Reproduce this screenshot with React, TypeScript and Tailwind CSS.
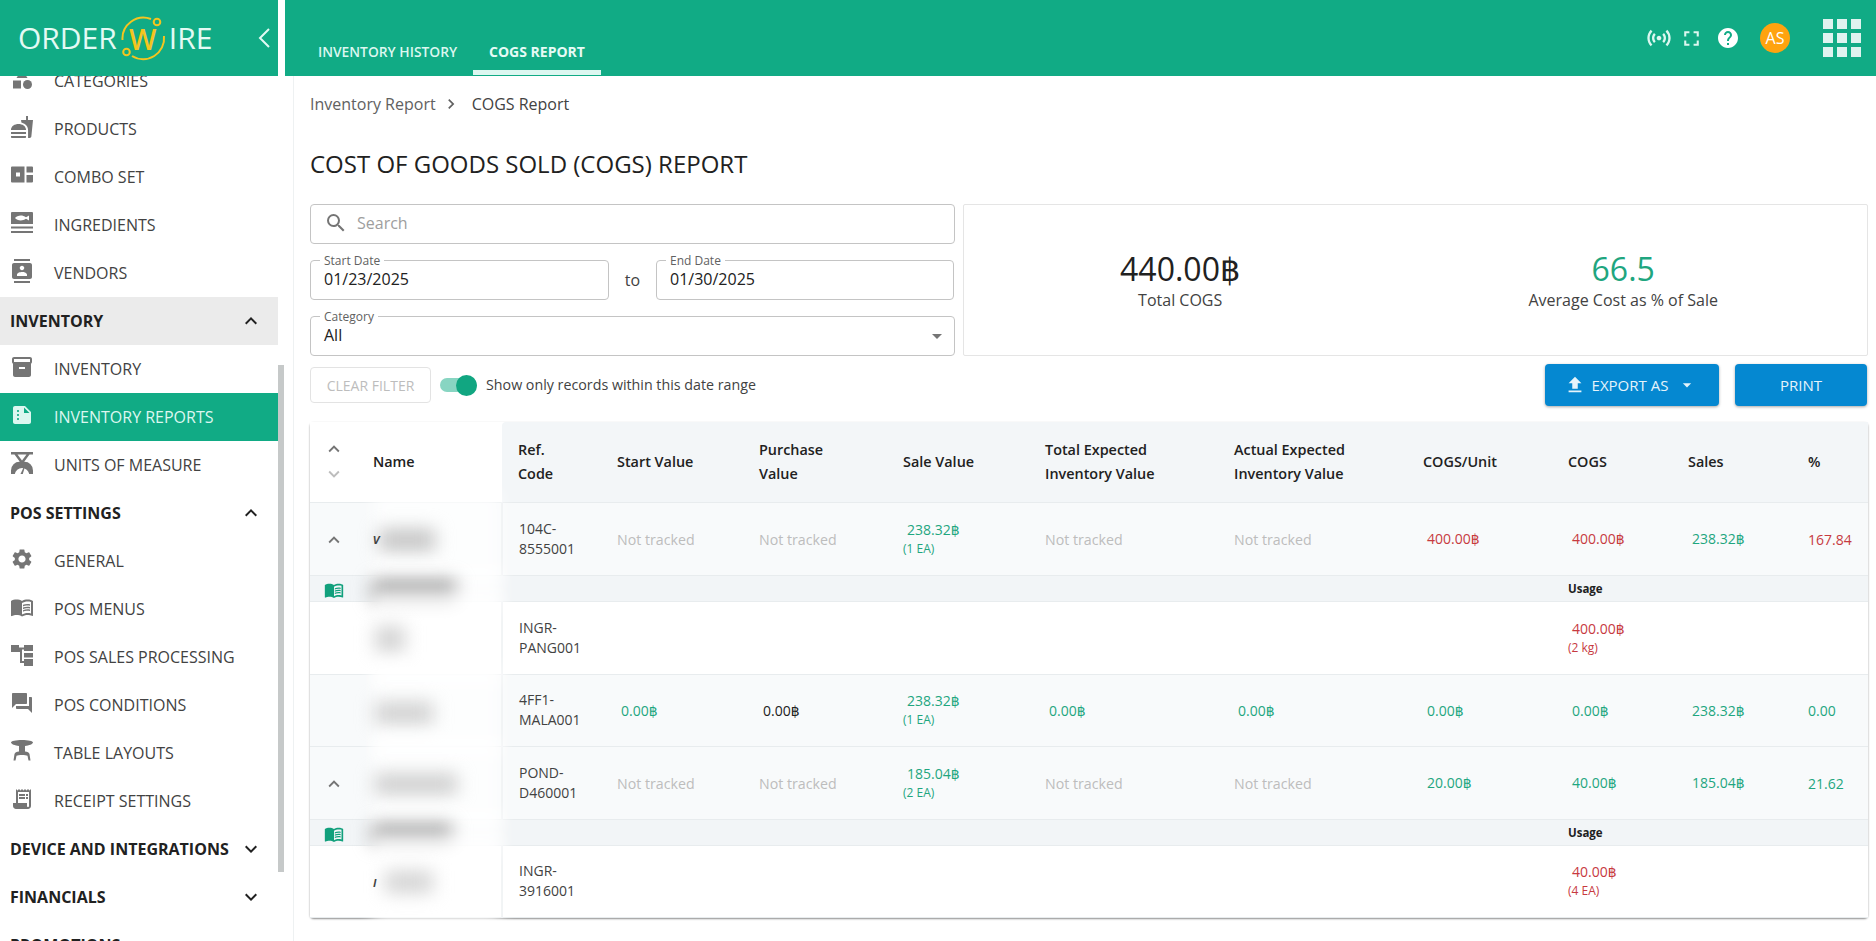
import type { ReactNode } from 'react';
import {
  MdArrowDropDown,
  MdCategory,
  MdChevronRight,
  MdContacts,
  MdExpandLess,
  MdExpandMore,
  MdFastfood,
  MdFileUpload,
  MdForum,
  MdFullscreen,
  MdHelp,
  MdInventory2,
  MdMenuBook,
  MdReceiptLong,
  MdSearch,
  MdSensors,
  MdSettings,
  MdSummarize,
} from 'react-icons/md';

function ComboIcon() {
  return (
    <svg viewBox="0 0 24 24" className="h-[24px] w-[24px]" fill="currentColor">
      <path d="M2 3.500h12.500v16H2a1 1 0 0 1-1-1v-14a1 1 0 0 1 1-1zm4 6v4h4v-4z" fillRule="evenodd" />
      <path d="M16.500 3.500H22a1 1 0 0 1 1 1v5h-6.500zM16.500 12H23v6.500a1 1 0 0 1-1 1h-5.500z" />
    </svg>
  );
}

function IngredientsIcon() {
  return (
    <svg viewBox="0 0 24 24" className="h-[24px] w-[24px]" fill="currentColor">
      <path
        d="M2 1h20a1 1 0 0 1 1 1v11H1V2a1 1 0 0 1 1-1zm3 6c2-2.500 7-3.500 11-.8l3-1.700v5l-3-1.700c-4 2.700-9 1.700-11-.8z"
        fillRule="evenodd"
      />
      <rect x="1" y="15.500" width="22" height="2" />
      <rect x="1" y="20" width="22" height="2" />
    </svg>
  );
}

function TreeIcon() {
  return (
    <svg viewBox="0 0 24 24" className="h-[24px] w-[24px]" fill="currentColor">
      <rect x="1" y="2" width="8" height="7" />
      <rect x="14" y="2" width="9" height="6" />
      <rect x="14" y="16" width="9" height="7" />
      <path d="M9 4.500h5v2h-2V18h2v2h-4V9H9z" />
      <rect x="14" y="10" width="9" height="4.500" />
    </svg>
  );
}

function ScaleIcon() {
  return (
    <svg viewBox="0 0 24 24" className="h-[24px] w-[24px]" fill="currentColor">
      <path d="M1 1h22v2.500h-3.500L14.200 10.800a8.500 8.500 0 0 1 8.800 8.700V23h-3.800a7.300 7.300 0 0 0-14.400 0H1v-3.500a8.500 8.500 0 0 1 8.800-8.700L4.500 3.500H1z" />
      <path d="M7.500 3.500h9L12 9.500z" fill="#fff" />
      <path d="M10.500 23l3-6.500 1 .7-1.700 5.800z" />
    </svg>
  );
}

function TableIcon() {
  return (
    <svg viewBox="0 0 24 24" className="h-[24px] w-[24px]" fill="currentColor">
      <path d="M12 1c6 0 11 1 11 2.500S19 6.500 15 7v5.500c2.500.3 4 1 4.500 2.500l1 6.500h-2l-1-4.800c-1-.5-3-.7-5.500-.7s-4.500.2-5.500.7l-1 4.800h-2l1-6.500c.5-1.500 2-2.200 4.500-2.500V7C5 6.500 1 5 1 3.500S6 1 12 1z" />
    </svg>
  );
}

function Logo() {
  return (
    <div className="flex items-center text-[30px] font-medium leading-none text-[#e3faf4]">
      <span>ORDER</span>
      <div className="relative mx-[3px] flex h-[46px] w-[46px] shrink-0 items-center justify-center">
        <svg viewBox="0 0 46 46" className="absolute inset-0 h-full w-full" fill="none" stroke="#f4c51f" strokeWidth="2">
          <path d="M2.500 25A21 21 0 0 1 31 4" />
          <path d="M44 21A21 21 0 0 1 12 41" />
          <circle cx="37" cy="7" r="3.300" />
          <circle cx="6.500" cy="37" r="3.300" />
        </svg>
        <span className="relative text-[29px] font-semibold text-[#f4c51f]">W</span>
      </div>
      <span>IRE</span>
    </div>
  );
}

const gray = 'text-[#757575]';

function NavItem({ icon, label, active }: { icon: ReactNode; label: string; active?: boolean }) {
  return (
    <div
      className={`flex h-[48px] shrink-0 items-center pl-[10px] text-[16px] ${
        active ? 'bg-[#11ab85] text-[#dcf7f0]' : 'text-[#424242]'
      }`}
    >
      <div className={`flex w-[44px] items-center justify-start pb-[5px] text-[24px] ${active ? 'text-[#dcf7f0]' : gray}`}>{icon}</div>
      <span>{label}</span>
    </div>
  );
}

function NavSection({ label, open, shaded }: { label: string; open?: boolean; shaded?: boolean }) {
  return (
    <div
      className={`flex h-[48px] shrink-0 items-center justify-between pl-[10px] pr-[15px] text-[16px] font-bold text-[#212121] ${
        shaded ? 'bg-[#ebebeb]' : ''
      }`}
    >
      <span>{label}</span>
      {open ? <MdExpandLess className="text-[24px]" /> : <MdExpandMore className="text-[24px]" />}
    </div>
  );
}

function Sidebar() {
  return (
    <aside className="relative flex w-[293px] shrink-0 flex-col">
      <div className="flex h-[76px] w-[278px] shrink-0 items-center justify-between bg-[#11ab85] pl-[18px] pr-[8px]">
        <Logo />
        <svg viewBox="0 0 12 20" className="h-[20px] w-[12px]" fill="none" stroke="#e3faf4" strokeWidth="2">
          <path d="M11 1 2 10l9 9" />
        </svg>
      </div>
      <div className="relative flex min-h-0 flex-1 overflow-hidden">
        <nav className="-mt-[19px] flex w-[278px] shrink-0 flex-col">
          <NavItem icon={<MdCategory />} label="CATEGORIES" />
          <NavItem icon={<MdFastfood />} label="PRODUCTS" />
          <NavItem icon={<ComboIcon />} label="COMBO SET" />
          <NavItem icon={<IngredientsIcon />} label="INGREDIENTS" />
          <NavItem icon={<MdContacts />} label="VENDORS" />
          <NavSection label="INVENTORY" open shaded />
          <NavItem icon={<MdInventory2 />} label="INVENTORY" />
          <NavItem icon={<MdSummarize />} label="INVENTORY REPORTS" active />
          <NavItem icon={<ScaleIcon />} label="UNITS OF MEASURE" />
          <NavSection label="POS SETTINGS" open />
          <NavItem icon={<MdSettings />} label="GENERAL" />
          <NavItem icon={<MdMenuBook />} label="POS MENUS" />
          <NavItem icon={<TreeIcon />} label="POS SALES PROCESSING" />
          <NavItem icon={<MdForum />} label="POS CONDITIONS" />
          <NavItem icon={<TableIcon />} label="TABLE LAYOUTS" />
          <NavItem icon={<MdReceiptLong />} label="RECEIPT SETTINGS" />
          <NavSection label="DEVICE AND INTEGRATIONS" />
          <NavSection label="FINANCIALS" />
          <NavSection label="PROMOTIONS" />
        </nav>
        {/* scrollbar thumb */}
        <div className="absolute left-[278px] top-[289px] h-[507px] w-[6px] bg-[#c6c9c9]" />
      </div>
    </aside>
  );
}

function TopBar() {
  return (
    <header className="flex h-[76px] shrink-0 items-stretch justify-between bg-[#11ab85]">
      <div className="flex items-end">
        <div className="flex h-[48px] w-[188px] items-center pl-[33px] text-[13.800px] font-semibold text-[#dcf7f0]">
          INVENTORY HISTORY
        </div>
        <div className="mb-px flex h-[48px] w-[128px] items-center justify-center border-b-[5px] border-[#dcf7f0] pt-[5px] text-[14px] font-bold text-[#e6fbf6]">
          COGS REPORT
        </div>
      </div>
      <div className="flex items-center pr-[15px] text-[#dcf7f0]">
        <MdSensors className="text-[28px]" />
        <MdFullscreen className="ml-[6px] text-[25px]" />
        <MdHelp className="ml-[12px] text-[24px] text-white" />
        <div className="ml-[20px] flex h-[30px] w-[30px] items-center justify-center rounded-full bg-[#ffa30f] text-[16px] text-white">
          AS
        </div>
        <div className="ml-[33px] grid w-[38px] grid-cols-3 gap-[4px]">
          {Array.from({ length: 9 }).map((_, i) => (
            <div key={i} className="h-[10px] w-[10px] bg-[#dff3ef]" />
          ))}
        </div>
      </div>
    </header>
  );
}

function Field({ label, value, className }: { label: string; value: string; className: string }) {
  return (
    <div className={`relative flex h-[40px] items-center rounded-[4px] border border-[#c4c4c4] pb-[2px] pl-[13px] text-[16px] text-[#212121] ${className}`}>
      <span className="absolute -top-[8px] left-[9px] bg-white px-[4px] text-[12px] leading-[16px] text-[#616161]">{label}</span>
      <span>{value}</span>
    </div>
  );
}

const green = 'text-[#1fa67f]';
const red = 'text-[#c73a3f]';

function Money({ value, sub, color }: { value: string; sub?: string; color: string }) {
  return (
    <div className={color}>
      <div className="pl-[4px] text-[14px] leading-[19px]">{value}</div>
      {sub && <div className="text-[12px] leading-[19px]">{sub}</div>}
    </div>
  );
}

function NotTracked() {
  return <span className="text-[14.200px] text-[#bdbdbd]">Not tracked</span>;
}

function Blur({ className }: { className: string }) {
  return (
    <>
      <span className="pointer-events-none absolute -bottom-[12px] -top-[12px] left-[16px] right-[0px] z-10 bg-white/70 blur-[8px]" />
      <span className={`pointer-events-none absolute z-10 blur-[9px] ${className}`} />
    </>
  );
}

type Row = {
  expand?: boolean;
  white?: boolean;
  short?: boolean;
  prefix?: string;
  blur: string;
  ref1: string;
  ref2: string;
  cells: ReactNode[];
};

const rows: (Row | { sub: string })[] = [
  {
    expand: true,
    prefix: 'v',
    blur: 'left-[22px] top-[26px] h-[22px] w-[56px] bg-[#c4c4c4]',
    ref1: '104C-',
    ref2: '8555001',
    cells: [
      <NotTracked />,
      <NotTracked />,
      <Money value="238.32฿" sub="(1 EA)" color={green} />,
      <NotTracked />,
      <NotTracked />,
      <Money value="400.00฿" color={red} />,
      <Money value="400.00฿" color={red} />,
      <Money value="238.32฿" color={green} />,
      <span className={`text-[14px] ${red}`}>167.84</span>,
    ],
  },
  { sub: 'left-[15px] top-[4px] h-[22px] w-[84px] bg-[#9c9c9c]' },
  {
    white: true,
    blur: 'left-[18px] top-[24px] h-[26px] w-[30px] bg-[#d4d4d4]',
    ref1: 'INGR-',
    ref2: 'PANG001',
    cells: [null, null, null, null, null, null, <Money value="400.00฿" sub="(2 kg)" color={red} />, null, null],
  },
  {
    short: true,
    blur: 'left-[18px] top-[27px] h-[22px] w-[58px] bg-[#d0d0d0]',
    ref1: '4FF1-',
    ref2: 'MALA001',
    cells: [
      <Money value="0.00฿" color={green} />,
      <Money value="0.00฿" color="text-[#212121]" />,
      <Money value="238.32฿" sub="(1 EA)" color={green} />,
      <Money value="0.00฿" color={green} />,
      <Money value="0.00฿" color={green} />,
      <Money value="0.00฿" color={green} />,
      <Money value="0.00฿" color={green} />,
      <Money value="238.32฿" color={green} />,
      <span className={`text-[14px] ${green}`}>0.00</span>,
    ],
  },
  {
    expand: true,
    blur: 'left-[18px] top-[27px] h-[20px] w-[82px] bg-[#cccccc]',
    ref1: 'POND-',
    ref2: 'D460001',
    cells: [
      <NotTracked />,
      <NotTracked />,
      <Money value="185.04฿" sub="(2 EA)" color={green} />,
      <NotTracked />,
      <NotTracked />,
      <Money value="20.00฿" color={green} />,
      <Money value="40.00฿" color={green} />,
      <Money value="185.04฿" color={green} />,
      <span className={`text-[14px] ${green}`}>21.62</span>,
    ],
  },
  { sub: 'left-[15px] top-[4px] h-[20px] w-[80px] bg-[#9f9f9f]' },
  {
    white: true,
    short: true,
    prefix: 'ı',
    blur: 'left-[28px] top-[25px] h-[22px] w-[48px] bg-[#d4d4d4]',
    ref1: 'INGR-',
    ref2: '3916001',
    cells: [null, null, null, null, null, null, <Money value="40.00฿" sub="(4 EA)" color={red} />, null, null],
  },
];

const headers: [string, string?][] = [
  ['Start Value'],
  ['Purchase', 'Value'],
  ['Sale Value'],
  ['Total Expected', 'Inventory Value'],
  ['Actual Expected', 'Inventory Value'],
  ['COGS/Unit'],
  ['COGS'],
  ['Sales'],
  ['%'],
];

function CogsTable() {
  return (
    <div className="ml-[16px] mt-[16px] w-[1558px] rounded-[4px] shadow-[0_1px_2px_rgba(0,0,0,0.45)]">
      <table className="w-[1558px] table-fixed border-collapse text-left">
        <colgroup>
          <col className="w-[47px]" />
          <col className="w-[145px]" />
          <col className="w-[99px]" />
          <col className="w-[142px]" />
          <col className="w-[144px]" />
          <col className="w-[142px]" />
          <col className="w-[189px]" />
          <col className="w-[189px]" />
          <col className="w-[145px]" />
          <col className="w-[120px]" />
          <col className="w-[120px]" />
          <col className="w-[76px]" />
        </colgroup>
        <thead>
          <tr className="h-[80px] border-b border-[#e8ecee] text-[14.400px] font-semibold leading-[24px] text-[#212121]">
            <th className="bg-white">
              <div className="flex flex-col items-center text-[22px] leading-none text-[#757575]">
                <MdExpandLess />
                <MdExpandMore className="mt-[3px] text-[#bdbdbd]" />
              </div>
            </th>
            <th className="bg-white pl-[16px] font-semibold">Name</th>
            <th className="rounded-tl-[4px] bg-[#f3f6f8] pl-[16px] font-semibold">
              Ref.
              <br />
              Code
            </th>
            {headers.map(([a, b]) => (
              <th key={a} className="bg-[#f3f6f8] pl-[16px] font-semibold">
                {a}
                {b && <br />}
                {b}
              </th>
            ))}
          </tr>
        </thead>
        <tbody>
          {rows.map((row, i) =>
            'sub' in row ? (
              <tr key={i} className="h-[26px] border-b border-[#e8ecee] bg-[#f2f5f7]">
                <td className="text-center align-middle">
                  <MdMenuBook className="inline-block text-[20px] text-[#11a07c]" />
                </td>
                <td className="relative">
                  <Blur className={row.sub} />
                </td>
                <td colSpan={7} />
                <td colSpan={3} className="pl-[16px] pt-[2px] text-[11.500px] font-bold text-[#212121]">
                  Usage
                </td>
              </tr>
            ) : (
              <tr
                key={i}
                className={`border-b border-[#e8ecee] ${row.short ? 'h-[72px]' : 'h-[73px]'} ${row.white ? 'bg-white' : 'bg-[#f8fafb]'}`}
              >
                <td className="text-center">
                  {row.expand && <MdExpandLess className="inline-block text-[22px] text-[#757575]" />}
                </td>
                <td className="relative border-r-2 border-[#eceff1] pl-[16px] text-[14px] font-semibold italic text-[#424242]">
                  <span className="relative z-20">{row.prefix}</span>
                  <Blur className={row.blur} />
                </td>
                <td className="pl-[16px] text-[14px] leading-[20px] text-[#424242]">
                  {row.ref1}
                  <br />
                  {row.ref2}
                </td>
                {row.cells.map((c, j) => (
                  <td key={j} className="pl-[16px] align-middle">
                    {c}
                  </td>
                ))}
              </tr>
            ),
          )}
        </tbody>
      </table>
    </div>
  );
}

export default function App() {
  return (
    <div className="flex h-[941px] w-[1876px] overflow-hidden bg-white font-['Open_Sans','Noto_Sans','DejaVu_Sans',sans-serif]">
      <Sidebar />
      <main className="flex min-w-0 flex-1 flex-col">
        <div className="-ml-[8px]">
          <TopBar />
        </div>
        <div className="flex flex-1 flex-col border-l border-[#eef1f2]">
          <div className="flex h-[56px] items-center pl-[16px] text-[16px] text-[#616161]">
            <span>Inventory Report</span>
            <MdChevronRight className="mx-[5px] text-[20px]" />
            <span className="ml-[6px] text-[#424242]">COGS Report</span>
          </div>
          <h1 className="pl-[16px] pt-[17px] text-[24px] font-normal leading-[30px] text-[#212121]">
            COST OF GOODS SOLD (COGS) REPORT
          </h1>
          <div className="mt-[25px] flex gap-[8px] pl-[16px] pr-[8px]">
            <div className="flex w-[645px] flex-col gap-[16px]">
              <div className="flex h-[40px] items-center rounded-[4px] border border-[#c4c4c4] pb-[2px] pl-[13px] text-[16px] text-[#9e9e9e]">
                <MdSearch className="mr-[9px] text-[24px] text-[#757575]" />
                Search
              </div>
              <div className="flex items-center">
                <Field label="Start Date" value="01/23/2025" className="w-[299px]" />
                <span className="w-[47px] text-center text-[16px] text-[#424242]">to</span>
                <Field label="End Date" value="01/30/2025" className="w-[298px]" />
              </div>
              <div className="relative">
                <Field label="Category" value="All" className="w-[645px]" />
                <MdArrowDropDown className="absolute right-[6px] top-[8px] text-[24px] text-[#757575]" />
              </div>
            </div>
            <div className="flex h-[152px] flex-1 items-center justify-around rounded-[2px] border border-[#e5e5e5] pr-[5px] text-center">
              <div className="pl-[12px]">
                <div className="text-[32px] leading-[40px] text-[#212121]">440.00฿</div>
                <div className="text-[16px] leading-[22px] text-[#424242]">Total COGS</div>
              </div>
              <div>
                <div className={`text-[32px] leading-[40px] ${green}`}>66.5</div>
                <div className="text-[16px] leading-[22px] text-[#424242]">Average Cost as % of Sale</div>
              </div>
            </div>
          </div>
          <div className="mt-[8px] flex items-start justify-between pl-[16px] pr-[9px]">
            <div className="mt-[3px] flex items-center">
              <div className="flex h-[36px] w-[121px] items-center justify-center rounded-[4px] border border-[#e3e3e3] text-[14px] text-[#bdbdbd]">
                CLEAR FILTER
              </div>
              <div className="relative ml-[9px] h-[14px] w-[37px] rounded-full bg-[#88d5c2]">
                <div className="absolute -top-[3.500px] right-0 h-[21px] w-[21px] rounded-full bg-[#11a681]" />
              </div>
              <span className="ml-[9px] text-[14.250px] text-[#424242]">Show only records within this date range</span>
            </div>
            <div className="flex gap-[16px]">
              <div className="flex h-[42px] w-[174px] items-center justify-center rounded-[4px] bg-[#0588d1] pr-[3px] text-[15px] text-[#e5f4fb] shadow-[0_1px_3px_rgba(0,0,0,0.35)]">
                <MdFileUpload className="mr-[6px] text-[22px]" />
                EXPORT AS
                <MdArrowDropDown className="ml-[9px] text-[20px]" />
              </div>
              <div className="flex h-[42px] w-[132px] items-center justify-center rounded-[4px] bg-[#0588d1] text-[15px] text-[#e5f4fb] shadow-[0_1px_3px_rgba(0,0,0,0.35)]">
                PRINT
              </div>
            </div>
          </div>
          <CogsTable />
        </div>
      </main>
    </div>
  );
}
